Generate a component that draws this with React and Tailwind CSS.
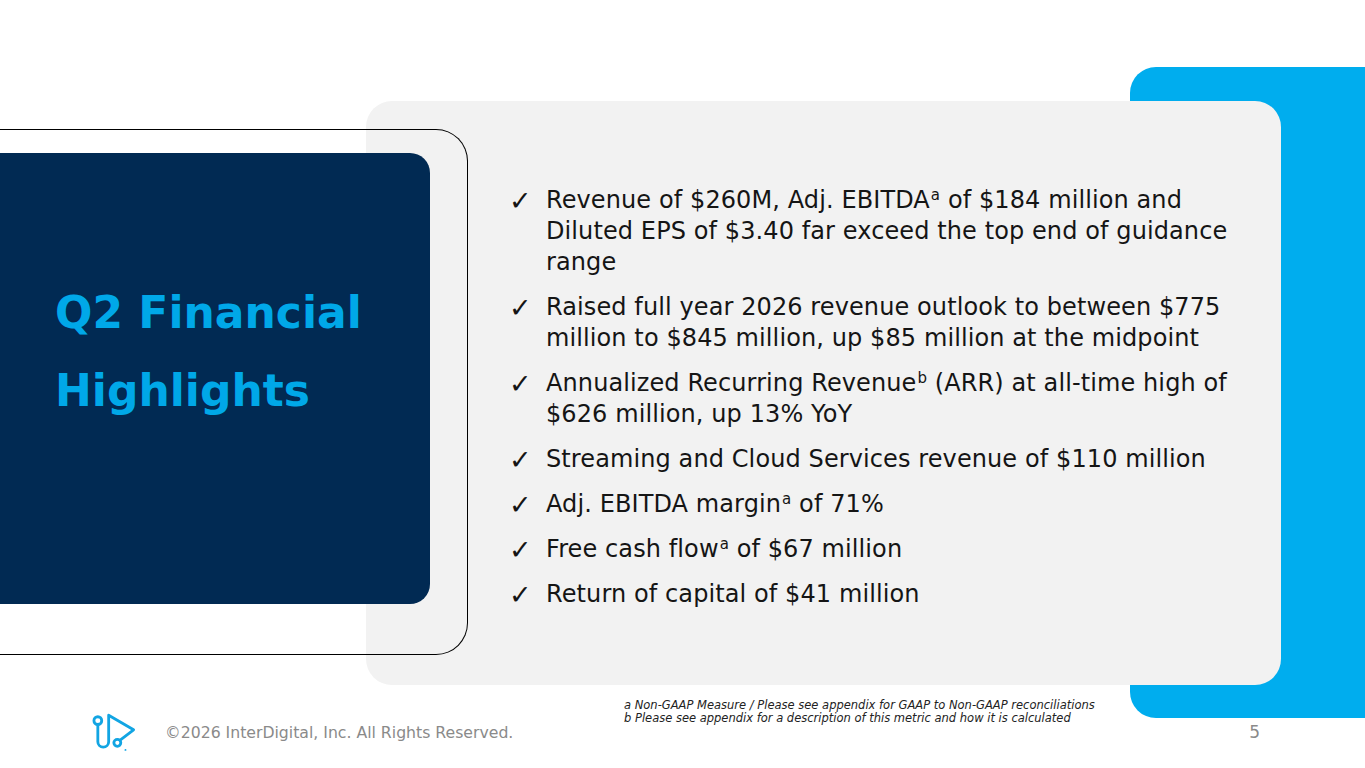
import React from "react";

const Sup = ({ children }) => (
  <sup className="text-[15px] -top-[0.55em] ml-[1px]">{children}</sup>
);

const bullets = [
  <>
    Revenue of $260M, Adj. EBITDA<Sup>a</Sup> of $184 million and
    <br />
    Diluted EPS of $3.40 far exceed the top end of guidance
    <br />
    range
  </>,
  <>
    Raised full year 2026 revenue outlook to between $775
    <br />
    million to $845 million, up $85 million at the midpoint
  </>,
  <>
    Annualized Recurring Revenue<Sup>b</Sup> (ARR) at all-time high of
    <br />
    $626 million, up 13% YoY
  </>,
  <>Streaming and Cloud Services revenue of $110 million</>,
  <>
    Adj. EBITDA margin<Sup>a</Sup> of 71%
  </>,
  <>
    Free cash flow<Sup>a</Sup> of $67 million
  </>,
  <>Return of capital of $41 million</>,
];

const Logo = () => (
  <svg width="52" height="48" viewBox="0 0 48 44" fill="none">
    <circle cx="10" cy="11.5" r="3.6" stroke="#12a5e3" strokeWidth="2.6" />
    <path
      d="M10 15.2 V31 A5 5 0 0 0 20 31 V6.5 L43 20 L30.6 29.4"
      stroke="#12a5e3"
      strokeWidth="2.6"
      strokeLinejoin="round"
      strokeLinecap="round"
    />
    <circle cx="28" cy="32" r="3.2" stroke="#12a5e3" strokeWidth="2.6" />
    <circle cx="35.5" cy="38.5" r="0.9" fill="#12a5e3" />
  </svg>
);

const App = () => {
  return (
    <div className="w-[1365px] h-[768px] overflow-hidden bg-white grid grid-cols-[366px_64px_38px_662px_151px_84px] grid-rows-[67px_34px_28px_24px_451px_51px_30px_33px_50px] font-['DejaVu_Sans',sans-serif]">
      {/* blue panel at the back */}
      <div className="col-start-5 col-end-7 row-start-2 row-end-9 bg-[#00adee] rounded-l-[26px]" />

      {/* gray content panel */}
      <div className="col-start-2 col-end-6 row-start-3 row-end-8 bg-[#f2f2f2] rounded-[26px] pl-[145px] pt-[84px]">
        <ul className="flex flex-col gap-[14px]">
          {bullets.map((b, i) => (
            <li key={i} className="flex text-[24px] leading-[31px] tracking-[0.1px] text-[#151515] whitespace-nowrap">
              <span className="w-[37px] shrink-0 text-[27px] leading-[31px] -ml-[2px]">✓</span>
              <span>{b}</span>
            </li>
          ))}
        </ul>
      </div>

      {/* outline frame */}
      <div className="col-start-1 col-end-4 row-start-4 row-end-7 border-[1.5px] border-l-0 border-black rounded-r-[32px]" />

      {/* navy title box */}
      <div className="col-start-1 col-end-3 row-start-5 row-end-6 bg-[#012a53] rounded-r-[20px] pl-[55px] pt-[121px]">
        <h1 className="text-[44px] leading-[78px] font-bold text-[#00a8e8]">
          Q2 Financial
          <br />
          Highlights
        </h1>
      </div>

      {/* footnotes */}
      <div className="col-start-4 col-end-6 row-start-8 row-end-10 pl-[156px] pt-[14px] text-[11.5px] leading-[12.5px] italic text-[#222] whitespace-nowrap">
        <p>a Non-GAAP Measure / Please see appendix for GAAP to Non-GAAP reconciliations</p>
        <p>b Please see appendix for a description of this metric and how it is calculated</p>
      </div>

      {/* footer */}
      <div className="col-start-1 col-end-7 row-start-8 row-end-10 flex items-end pb-[12px] pl-[87px] pr-[105px]">
        <Logo />
        <span className="ml-[26px] mb-[11px] text-[15.7px] text-[#8a8a8a]">
          ©2026 InterDigital, Inc. All Rights Reserved.
        </span>
        <span className="ml-auto mb-[11px] text-[17px] text-[#8a8a8a]">5</span>
      </div>
    </div>
  );
};

export default App;
